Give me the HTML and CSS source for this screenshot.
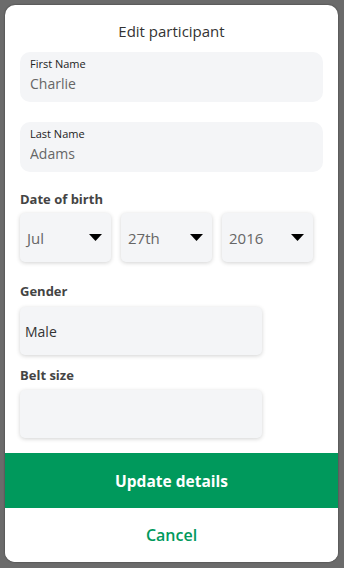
FILE: index.html
```html
<!DOCTYPE html>
<html lang="en">
<head>
    <meta charset="UTF-8">
    <meta name="viewport" content="width=device-width, initial-scale=1.0">
    <title>Edit participant</title>
    <link rel="stylesheet" href="styles.css">
</head>
<body>
    <div class="overlay">
        <div class="modal">
            <h1 class="modal-title">Edit participant</h1>

            <form class="modal-form">
                <div class="text-field">
                    <label for="firstName">First Name</label>
                    <input type="text" id="firstName" value="Charlie">
                </div>

                <div class="text-field">
                    <label for="lastName">Last Name</label>
                    <input type="text" id="lastName" value="Adams">
                </div>

                <div class="group-label">Date of birth</div>
                <div class="date-row">
                    <div class="select-box">
                        <span>Jul</span>
                        <svg class="caret" width="13" height="7" viewBox="0 0 13 7"><path d="M0 0h13L6.5 7z"/></svg>
                    </div>
                    <div class="select-box">
                        <span>27th</span>
                        <svg class="caret" width="13" height="7" viewBox="0 0 13 7"><path d="M0 0h13L6.5 7z"/></svg>
                    </div>
                    <div class="select-box">
                        <span>2016</span>
                        <svg class="caret" width="13" height="7" viewBox="0 0 13 7"><path d="M0 0h13L6.5 7z"/></svg>
                    </div>
                </div>

                <div class="group-label gender-label">Gender</div>
                <div class="plain-box">Male</div>

                <div class="group-label belt-label">Belt size</div>
                <div class="plain-box"></div>
            </form>

            <button type="button" class="btn-update">Update details</button>
            <button type="button" class="btn-cancel">Cancel</button>
        </div>
    </div>
</body>
</html>
```

FILE: styles.css
```css
* {
    box-sizing: border-box;
}
body {
    margin: 0;
    font-family: "Open Sans", "Noto Sans", sans-serif;
    background-color: #6b6b6b;
}
.overlay {
    padding: 5px 6px 6px 5px;
}
.modal {
    width: 333px;
    height: 557px;
    background-color: #fff;
    border-radius: 10px;
    overflow: hidden;
    box-shadow: 0 0 2px rgba(0, 0, 0, 0.5);
    display: flex;
    flex-direction: column;
}
.modal-title {
    margin: 0;
    padding-top: 15px;
    font-size: 15px;
    font-weight: 400;
    line-height: 22px;
    color: #333;
    text-align: center;
}
.modal-form {
    padding: 10px 15px 0 15px;
}
.text-field {
    height: 50px;
    margin-bottom: 20px;
    padding: 5px 10px 0 10px;
    background-color: #f4f5f7;
    border-radius: 10px;
}
.text-field label {
    display: block;
    font-size: 11px;
    line-height: 13px;
    color: #222;
}
.text-field input {
    display: block;
    width: 100%;
    margin-top: 2px;
    padding: 0;
    border: none;
    background: transparent;
    font-family: inherit;
    font-size: 14px;
    line-height: 24px;
    height: 24px;
    color: #666;
    outline: none;
}
.group-label {
    margin-top: -2px;
    font-size: 13px;
    font-weight: 700;
    line-height: 18px;
    color: #444;
}
.date-row {
    display: flex;
    gap: 10px;
    margin-top: 5px;
}
.select-box {
    width: 91px;
    height: 49px;
    display: flex;
    align-items: center;
    justify-content: space-between;
    padding: 0 9px 0 7px;
    background-color: #f4f5f7;
    border-radius: 5px;
    box-shadow: 0 1px 4px rgba(0, 0, 0, 0.18);
    font-size: 15px;
    color: #666;
}
.caret {
    fill: #000;
}
.gender-label {
    margin-top: 20px;
}
.belt-label {
    margin-top: 11px;
}
.plain-box {
    width: 242px;
    height: 48px;
    margin-top: 7px;
    padding-left: 5px;
    display: flex;
    align-items: center;
    background-color: #f4f5f7;
    border-radius: 5px;
    box-shadow: 0 1px 4px rgba(0, 0, 0, 0.18);
    font-size: 14px;
    color: #333;
}
.belt-label + .plain-box {
    margin-top: 6px;
}
.btn-update {
    margin-top: 15px;
    height: 55px;
    border: none;
    background-color: #00995c;
    color: #fff;
    font-family: inherit;
    font-size: 15.5px;
    font-weight: 700;
    cursor: pointer;
}
.btn-cancel {
    height: 54px;
    border: none;
    background-color: #fff;
    color: #00995c;
    font-family: inherit;
    font-size: 16px;
    font-weight: 600;
    cursor: pointer;
}
```
